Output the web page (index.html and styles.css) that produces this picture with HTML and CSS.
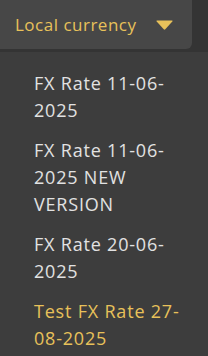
FILE: index.html
```html
<!DOCTYPE html>
<html lang="en">

<head>
    <meta charset="UTF-8">
    <meta name="viewport" content="width=device-width, initial-scale=1.0">
    <title>Local currency</title>
    <link rel="stylesheet" href="styles.css">
</head>

<body>
    <div class="header">
        <button type="button" class="toggle">
            <span>Local currency</span>
            <svg class="caret" width="17" height="10" viewBox="0 0 17 10">
                <path d="M1 0.5 H16 Q17 0.5 16.3 1.4 L9.3 9.3 Q8.5 10 7.7 9.3 L0.7 1.4 Q0 0.5 1 0.5 Z" fill="#e8c15a" />
            </svg>
        </button>
    </div>

    <ul class="menu">
        <li class="item">FX Rate 11-06-2025</li>
        <li class="item">FX Rate 11-06-2025 NEW VERSION</li>
        <li class="item">FX Rate 20-06-2025</li>
        <li class="item active">Test FX Rate 27-08-2025</li>
    </ul>
</body>

</html>
```

FILE: styles.css
```css
body {
    margin: 0;
    background-color: #3d3d3d;
    font-family: "Open Sans", "Lato", sans-serif;
}

.header {
    background-color: #343434;
    height: 52px;
}

.toggle {
    display: flex;
    align-items: center;
    justify-content: space-between;
    width: 192px;
    height: 49px;
    padding: 0 19px 0 15px;
    border: none;
    border-radius: 0 0 6px 0;
    background-color: #474747;
    color: #e8c15a;
    font-family: inherit;
    font-size: 17px;
    letter-spacing: 0.5px;
    cursor: pointer;
}

.caret {
    margin-top: 1px;
}

.menu {
    list-style: none;
    margin: 0;
    padding: 18px 14px 0 34px;
}

.item {
    color: #e2e2e2;
    font-size: 18px;
    letter-spacing: 0.8px;
    line-height: 27px;
    margin-bottom: 13px;
}

.active {
    color: #e8c15a;
}
```
